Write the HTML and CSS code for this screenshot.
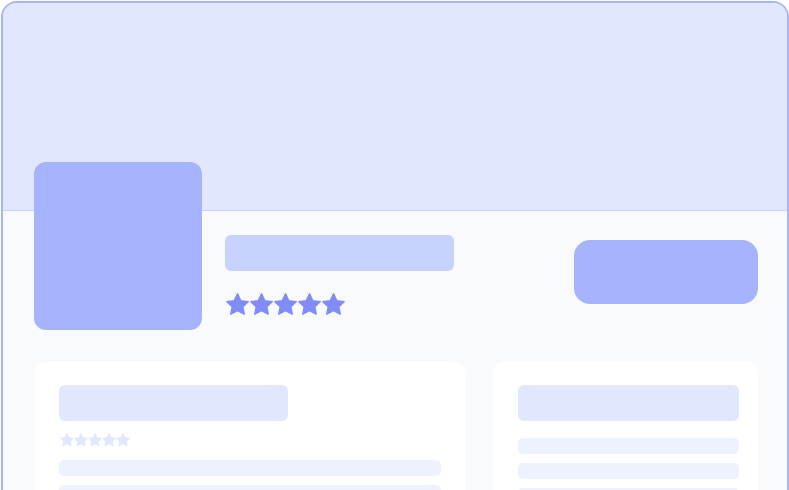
FILE: index.html
```html
<!DOCTYPE html>
<html lang="en">
<head>
<meta charset="utf-8">
<title>Profile skeleton</title>
<link rel="stylesheet" href="styles.css">
</head>
<body>
<svg width="0" height="0" class="defs" aria-hidden="true">
  <defs>
    <path id="star" d="M12 0.9L15.4 8.1L23.1 9.1L17.5 14.4L19 22L12 18.3L5 22L6.5 14.4L0.9 9.1L8.6 8.1Z"/>
  </defs>
</svg>
<div class="frame">
  <div class="cover"></div>
  <div class="profile">
    <div class="avatar"></div>
    <div class="info">
      <div class="title"></div>
      <div class="stars big">
        <svg viewBox="0 0 24 24"><use href="#star"/></svg>
        <svg viewBox="0 0 24 24"><use href="#star"/></svg>
        <svg viewBox="0 0 24 24"><use href="#star"/></svg>
        <svg viewBox="0 0 24 24"><use href="#star"/></svg>
        <svg viewBox="0 0 24 24"><use href="#star"/></svg>
      </div>
    </div>
    <div class="btn"></div>
  </div>
  <div class="cards">
    <div class="card main">
      <div class="bar"></div>
      <div class="stars small">
        <svg viewBox="0 0 24 24"><use href="#star"/></svg>
        <svg viewBox="0 0 24 24"><use href="#star"/></svg>
        <svg viewBox="0 0 24 24"><use href="#star"/></svg>
        <svg viewBox="0 0 24 24"><use href="#star"/></svg>
        <svg viewBox="0 0 24 24"><use href="#star"/></svg>
      </div>
      <div class="lines first">
        <div class="line"></div>
        <div class="line"></div>
        <div class="line"></div>
      </div>
    </div>
    <div class="card side">
      <div class="bar wide"></div>
      <div class="lines second">
        <div class="line"></div>
        <div class="line"></div>
        <div class="line"></div>
      </div>
    </div>
  </div>
</div>
</body>
</html>
```
FILE: styles.css
```css
html, body {
  margin: 0;
  padding: 0;
  background: #ffffff;
  overflow: hidden;
  font-family: "Liberation Sans", Arial, sans-serif;
}
.defs {
  position: absolute;
  width: 0;
  height: 0;
}
.frame {
  box-sizing: border-box;
  width: 788px;
  height: 620px;
  margin: 1px 0 0 1px;
  border: 2px solid #a5b4fc;
  border-radius: 16px;
  overflow: hidden;
  background: #f8fafc;
}
.cover {
  height: 207px;
  background: #e0e7ff;
  border-bottom: 1px solid #c7d2fe;
}
.profile {
  display: flex;
  align-items: flex-start;
  padding: 0 29px 0 31px;
}
.avatar {
  width: 168px;
  height: 168px;
  margin-top: -49px;
  border-radius: 12px;
  background: #a5b4fc;
  flex: none;
}
.info {
  margin-left: 23px;
  padding-top: 24px;
}
.title {
  width: 229px;
  height: 36px;
  border-radius: 6px;
  background: #c7d2fe;
}
.stars {
  display: flex;
}
.stars svg {
  display: block;
  overflow: visible;
  stroke-linejoin: round;
}
.stars.big {
  margin-top: 22px;
  margin-left: 1px;
  gap: 1px;
}
.stars.big svg {
  width: 23px;
  height: 23px;
  fill: #818cf8;
  stroke: #818cf8;
  stroke-width: 1.6;
}
.stars.small {
  margin-top: 12px;
  margin-left: 1px;
  gap: 0;
}
.stars.small svg {
  width: 14px;
  height: 14px;
  fill: #e0e7ff;
  stroke: #e0e7ff;
  stroke-width: 1.6;
}
.btn {
  margin-left: auto;
  margin-top: 29px;
  width: 184px;
  height: 64px;
  border-radius: 16px;
  background: #a5b4fc;
  flex: none;
}
.cards {
  display: flex;
  gap: 28px;
  padding: 32px 29px 0 32px;
}
.card {
  background: #ffffff;
  border-radius: 12px;
  height: 200px;
  box-sizing: border-box;
  padding: 23px 24px 0 24px;
}
.card.main {
  width: 430px;
  flex: none;
}
.card.side {
  flex: 1;
  margin-top: -1px;
  padding: 24px 19px 0 25px;
}
.bar {
  width: 229px;
  height: 36px;
  border-radius: 6px;
  background: #e0e7ff;
}
.bar.wide {
  width: auto;
}
.lines {
  display: flex;
  flex-direction: column;
  gap: 9px;
}
.lines.first {
  margin-top: 13px;
}
.lines.second {
  margin-top: 17px;
}
.line {
  height: 16px;
  border-radius: 5px;
  background: #eef2ff;
}
```
